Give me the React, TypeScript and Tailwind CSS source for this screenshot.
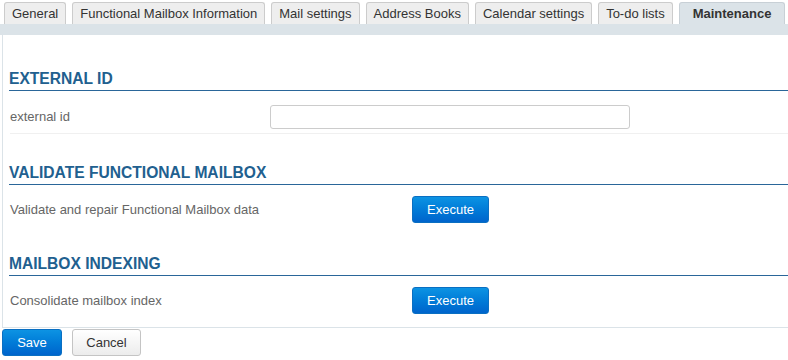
const tabs = [
  "General",
  "Functional Mailbox Information",
  "Mail settings",
  "Address Books",
  "Calendar settings",
  "To-do lists",
  "Maintenance",
];

const ExecuteButton = () => (
  <button className="h-[27px] w-[77px] rounded-[3px] border border-[#0a6fc2] bg-gradient-to-b from-[#0d93e3] to-[#0064cc] text-[13px] text-white">
    Execute
  </button>
);

const SectionHeading = ({ title, className }: { title: string; className: string }) => (
  <h2
    className={`ml-[6px] border-b border-[#2a6699] pb-[1px] text-[15.6px] font-bold leading-[20px] text-[#21608f] ${className}`}
  >
    {title}
  </h2>
);

const App = () => {
  return (
    <div className="h-[360px] w-[788px] overflow-hidden bg-white font-['Liberation_Sans',Arial,sans-serif] text-[13px] text-[#333]">
      {/* tabs */}
      <div className="flex gap-[6px] pl-[4px] pt-[2px]">
        {tabs.map((t) => {
          const active = t === "Maintenance";
          return (
            <div
              key={t}
              className={
                active
                  ? "h-[22px] rounded-t-[3px] border border-b-0 border-[#c8d0d6] bg-[#dbe3e8] px-[13px] pt-[3px] font-bold leading-[16px] text-[#333]"
                  : "h-[22px] rounded-t-[3px] border border-b-0 border-[#cccccc] bg-[#eeeeee] px-[7px] pt-[3px] leading-[16px] text-[#333]"
              }
            >
              {t}
            </div>
          );
        })}
      </div>
      <div className="h-[11px] bg-[#dbe3e8]" />

      {/* panel */}
      <div className="ml-[2px] h-[293px] border-b border-l border-[#dbe3e8] text-[#666]">
        <SectionHeading title="EXTERNAL ID" className="pt-[34px]" />
        <div className="ml-[7px] flex items-center border-b border-[#f0f0f0] pb-[4px] pt-[14px]">
          <span className="w-[260px]">external id</span>
          <input
            type="text"
            className="h-[24px] w-[360px] rounded-[3px] border border-[#cccccc] bg-white px-2 outline-none"
          />
        </div>

        <SectionHeading title="VALIDATE FUNCTIONAL MAILBOX" className="mt-[29px]" />
        <div className="ml-[7px] flex items-center pt-[11px]">
          <span className="w-[402px]">Validate and repair Functional Mailbox data</span>
          <ExecuteButton />
        </div>

        <SectionHeading title="MAILBOX INDEXING" className="mt-[31px]" />
        <div className="ml-[7px] flex items-center pt-[11px]">
          <span className="w-[402px]">Consolidate mailbox index</span>
          <ExecuteButton />
        </div>
      </div>

      {/* footer buttons */}
      <div className="flex gap-[10px] pl-[2px] pt-[1px]">
        <button className="h-[27px] w-[60px] rounded-[3px] border border-[#0a6fc2] bg-gradient-to-b from-[#0d93e3] to-[#0064cc] text-[13px] text-white">
          Save
        </button>
        <button className="h-[27px] w-[69px] rounded-[3px] border border-[#c4c4c4] bg-gradient-to-b from-white to-[#ececec] text-[13px] text-[#333]">
          Cancel
        </button>
      </div>
    </div>
  );
};

export default App;
